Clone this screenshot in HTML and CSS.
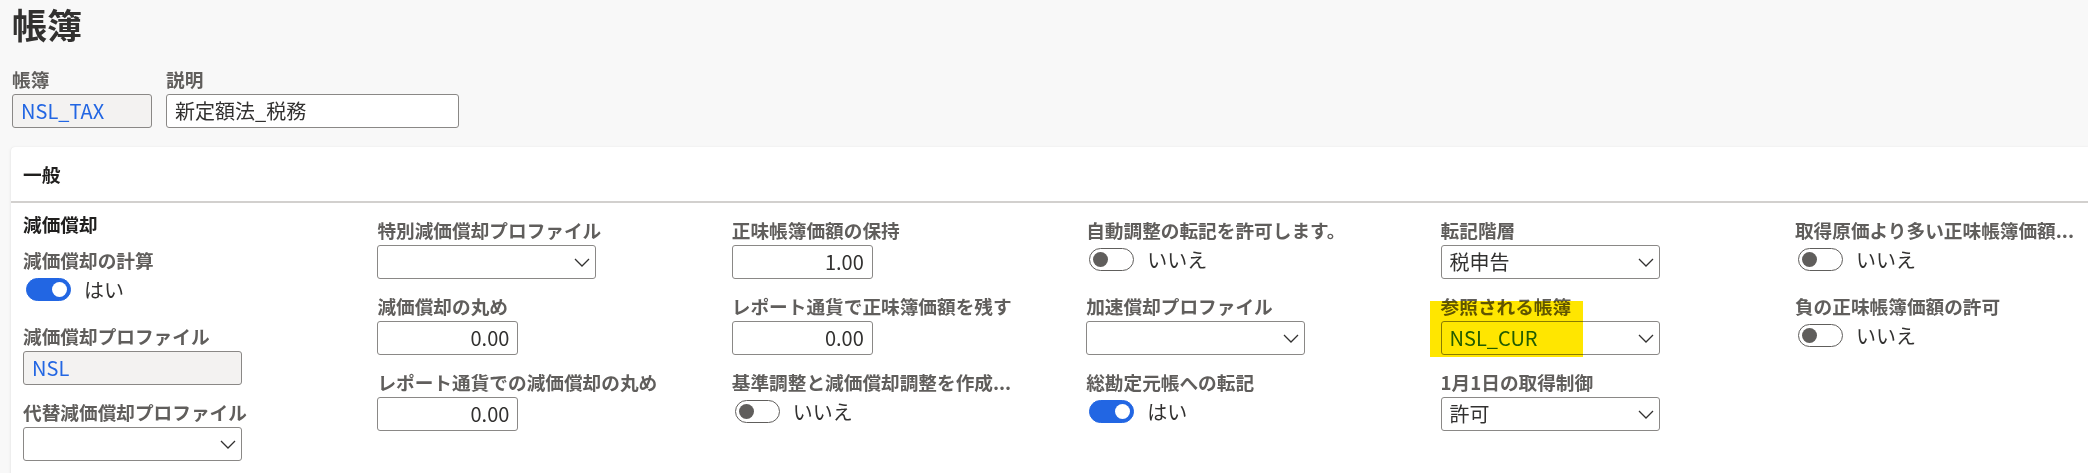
FILE: index.html
```html
<!DOCTYPE html>
<html lang="ja">
<head>
<meta charset="utf-8">
<title>帳簿</title>
<link rel="stylesheet" href="styles.css">
</head>
<body>
<div class="page">
  <h1 class="title">帳簿</h1>
  <div class="top-fields">
    <div class="field">
      <div class="label">帳簿</div>
      <div class="input readonly w-id"><span class="link">NSL_TAX</span></div>
    </div>
    <div class="field">
      <div class="label">説明</div>
      <div class="input w-desc">新定額法_税務</div>
    </div>
  </div>

  <section class="card">
    <div class="card-header">一般</div>
    <div class="card-body">
      <div class="col col-first">
        <div class="group-title">減価償却</div>
        <div class="field">
          <div class="label">減価償却の計算</div>
          <div class="toggle-row"><span class="toggle on"><span class="knob"></span></span><span class="toggle-text">はい</span></div>
        </div>
        <div class="field">
          <div class="label">減価償却プロファイル</div>
          <div class="input readonly w-wide"><span class="link">NSL</span></div>
        </div>
        <div class="field">
          <div class="label">代替減価償却プロファイル</div>
          <div class="input select w-wide"><span class="value"></span><svg class="chev" viewBox="0 0 16 9" width="16" height="9"><path d="M1 1l7 7 7-7" fill="none" stroke="#323130" stroke-width="1.3"/></svg></div>
        </div>
      </div>

      <div class="col">
        <div class="field">
          <div class="label">特別減価償却プロファイル</div>
          <div class="input select w-wide"><span class="value"></span><svg class="chev" viewBox="0 0 16 9" width="16" height="9"><path d="M1 1l7 7 7-7" fill="none" stroke="#323130" stroke-width="1.3"/></svg></div>
        </div>
        <div class="field">
          <div class="label">減価償却の丸め</div>
          <div class="input num w-num">0.00</div>
        </div>
        <div class="field">
          <div class="label">レポート通貨での減価償却の丸め</div>
          <div class="input num w-num">0.00</div>
        </div>
      </div>

      <div class="col">
        <div class="field">
          <div class="label">正味帳簿価額の保持</div>
          <div class="input num w-num">1.00</div>
        </div>
        <div class="field">
          <div class="label">レポート通貨で正味簿価額を残す</div>
          <div class="input num w-num">0.00</div>
        </div>
        <div class="field">
          <div class="label">基準調整と減価償却調整を作成...</div>
          <div class="toggle-row"><span class="toggle"><span class="knob"></span></span><span class="toggle-text">いいえ</span></div>
        </div>
      </div>

      <div class="col">
        <div class="field">
          <div class="label">自動調整の転記を許可します。</div>
          <div class="toggle-row"><span class="toggle"><span class="knob"></span></span><span class="toggle-text">いいえ</span></div>
        </div>
        <div class="field">
          <div class="label">加速償却プロファイル</div>
          <div class="input select w-wide"><span class="value"></span><svg class="chev" viewBox="0 0 16 9" width="16" height="9"><path d="M1 1l7 7 7-7" fill="none" stroke="#323130" stroke-width="1.3"/></svg></div>
        </div>
        <div class="field">
          <div class="label">総勘定元帳への転記</div>
          <div class="toggle-row"><span class="toggle on"><span class="knob"></span></span><span class="toggle-text">はい</span></div>
        </div>
      </div>

      <div class="col">
        <div class="field">
          <div class="label">転記階層</div>
          <div class="input select w-wide"><span class="value">税申告</span><svg class="chev" viewBox="0 0 16 9" width="16" height="9"><path d="M1 1l7 7 7-7" fill="none" stroke="#323130" stroke-width="1.3"/></svg></div>
        </div>
        <div class="field marked">
          <div class="label">参照される帳簿</div>
          <div class="input select w-wide"><span class="value link">NSL_CUR</span><svg class="chev" viewBox="0 0 16 9" width="16" height="9"><path d="M1 1l7 7 7-7" fill="none" stroke="#323130" stroke-width="1.3"/></svg></div>
          <div class="highlight"></div>
        </div>
        <div class="field">
          <div class="label">1月1日の取得制御</div>
          <div class="input select w-wide"><span class="value">許可</span><svg class="chev" viewBox="0 0 16 9" width="16" height="9"><path d="M1 1l7 7 7-7" fill="none" stroke="#323130" stroke-width="1.3"/></svg></div>
        </div>
      </div>

      <div class="col">
        <div class="field">
          <div class="label">取得原価より多い正味帳簿価額...</div>
          <div class="toggle-row"><span class="toggle"><span class="knob"></span></span><span class="toggle-text">いいえ</span></div>
        </div>
        <div class="field">
          <div class="label">負の正味帳簿価額の許可</div>
          <div class="toggle-row"><span class="toggle"><span class="knob"></span></span><span class="toggle-text">いいえ</span></div>
        </div>
      </div>
    </div>
  </section>
</div>
</body>
</html>
```

FILE: styles.css
```css
* { box-sizing: border-box; }

html, body {
  margin: 0;
  padding: 0;
}

body {
  width: 2088px;
  height: 473px;
  overflow: hidden;
  background: #f8f8f8;
  font-family: "Noto Sans CJK JP", "Noto Sans", sans-serif;
  color: #323130;
}

.page {
  padding: 2px 0 0 11px;
}

.title {
  margin: 0;
  padding-left: 1px;
  font-size: 35px;
  line-height: 44px;
  font-weight: 700;
  color: #323130;
}

.top-fields {
  display: flex;
  gap: 14px;
  margin-top: 21px;
  padding-left: 1px;
}

.field {
  display: flex;
  flex-direction: column;
}

.label {
  font-size: 18.67px;
  line-height: 24px;
  font-weight: 700;
  color: #605e5c;
  white-space: nowrap;
  margin-bottom: 3px;
}

.input {
  height: 34px;
  border: 1px solid #8a8886;
  border-radius: 3px;
  background: #fff;
  font-size: 20px;
  line-height: 32px;
  padding: 0 8px;
  color: #323130;
  white-space: nowrap;
  display: flex;
  align-items: center;
}

.input.readonly {
  background: #f3f2f1;
}

.input.num {
  justify-content: flex-end;
}

.input.select {
  justify-content: space-between;
  padding-right: 5px;
}

.chev {
  display: block;
  flex: none;
}

.link {
  color: #2266e3;
}

.w-id { width: 140px; }
.w-desc { width: 293px; }
.w-wide { width: 219px; }
.w-num { width: 141px; }

.card {
  margin-top: 19px;
  background: #fff;
  border-radius: 4px 0 0 0;
  box-shadow: 0 1.6px 3.6px rgba(0, 0, 0, 0.10), 0 0.3px 0.9px rgba(0, 0, 0, 0.08);
  height: 340px;
}

.card-header {
  padding: 15px 12px;
  font-size: 18.67px;
  line-height: 24px;
  font-weight: 700;
  color: #201f1e;
  border-bottom: 2px solid #d2d0ce;
}

.card-body {
  display: grid;
  grid-template-columns: repeat(6, 354.4px);
  padding: 9px 0 0 12px;
}

.col {
  display: flex;
  flex-direction: column;
  gap: 15px;
  padding-top: 6px;
}

.col-first {
  padding-top: 0;
  gap: 0;
}

.col-first .field {
  margin-bottom: 15px;
}

.group-title {
  font-size: 18.67px;
  line-height: 24px;
  font-weight: 700;
  color: #201f1e;
  margin-bottom: 12px;
}

.toggle-row {
  height: 34px;
  display: flex;
  align-items: flex-start;
  padding: 3px 0 0 3px;
}

.toggle {
  width: 45px;
  height: 23px;
  border-radius: 12px;
  border: 1.5px solid #605e5c;
  background: #fff;
  display: flex;
  align-items: center;
  padding: 0 3px;
  flex: none;
}

.toggle .knob {
  width: 15px;
  height: 15px;
  border-radius: 50%;
  background: #605e5c;
}

.toggle.on {
  background: #2266e3;
  border-color: #2266e3;
  justify-content: flex-end;
}

.toggle.on .knob {
  background: #fff;
}

.toggle-text {
  margin-left: 13px;
  font-size: 20px;
  line-height: 23px;
  color: #323130;
}

.field.marked {
  position: relative;
}

.highlight {
  position: absolute;
  left: -11px;
  top: 7px;
  width: 153px;
  height: 56px;
  background: #ffe600;
  mix-blend-mode: multiply;
  pointer-events: none;
}
```
